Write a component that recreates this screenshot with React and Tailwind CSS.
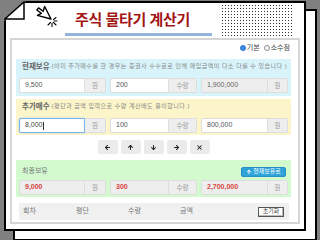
import { ArrowLeft, ArrowUp, ArrowDown, ArrowRight, X } from "lucide-react";

function Cursor() {
  return (
    <svg width="26" height="24" viewBox="0 0 26 24" className="shrink-0">
      <g transform="translate(19 16) rotate(153)">
        <path
          d="M0 0 L0 14 L3.5 10.5 L6 15.5 L8.5 14.5 L6 9.5 L10.5 9.5 Z"
          fill="#fff"
          stroke="#000"
          strokeWidth="1.4"
          strokeLinejoin="round"
        />
      </g>
      <g stroke="#000" strokeWidth="1.1" strokeLinecap="round">
        <path d="M20 20 L20 23.5" />
        <path d="M21.5 19.5 L24 22" />
        <path d="M22 18 L25 18" />
        <path d="M18.5 19.5 L16 22" />
        <path d="M21.5 16.5 L24 14.5" />
      </g>
    </svg>
  );
}

function Fold() {
  return (
    <svg
      width="24"
      height="22"
      viewBox="0 0 24 22"
      className="absolute -left-[2px] -top-[2px]"
    >
      <polygon points="0,0 22,0 0,20" fill="#808080" />
      <polygon
        points="0.8,18 20,1 20,18"
        fill="#fff"
        stroke="#000"
        strokeWidth="1.5"
        strokeLinejoin="miter"
      />
    </svg>
  );
}

function Field({ box, unitBox, value, unit, readOnly, red, focus }) {
  return (
    <div className="flex h-[15px]">
      <div
        className={
          box +
          " flex items-center pl-[5px] rounded-l-[2px] border text-[7px] " +
          (focus
            ? "border-[#7bb3e8] bg-white shadow-[0_0_2px_#a8d0f5] text-[#444]"
            : readOnly
            ? "border-[#dddddd] bg-[#eeeeee]"
            : "border-[#dddddd] bg-white text-[#555]") +
          (red ? " text-[#d9433f] font-bold" : readOnly ? " text-[#666]" : "")
        }
      >
        {value}
        {focus && <span className="ml-[0.5px] h-[8px] border-r border-[#333]" />}
      </div>
      <div
        className={
          unitBox +
          " flex items-center justify-center rounded-r-[2px] border border-l-0 border-[#dddddd] bg-[#eeeeee] text-[6.5px] text-[#999]"
        }
      >
        {unit}
      </div>
    </div>
  );
}

function Row({ vals, readOnly3, red, focus1 }) {
  return (
    <div className="flex gap-[4px]">
      <Field box="w-[66px]" unitBox="w-[21px]" value={vals[0]} unit="원" readOnly={red} red={red} focus={focus1} />
      <Field box="w-[59px]" unitBox="w-[28px]" value={vals[1]} unit="수량" readOnly={red} red={red} />
      <Field box="w-[67px]" unitBox="w-[20px]" value={vals[2]} unit="원" readOnly={readOnly3 || red} red={red} />
    </div>
  );
}

export default function App() {
  return (
    <div className="w-[320px] h-[240px] overflow-hidden bg-[#808080] pt-[1px] pl-[4px] font-[family-name:'Liberation_Sans','Noto_Sans_CJK_KR',sans-serif]">
      <div className="relative w-[302px] h-[230px] border-2 border-black bg-white shadow-[10px_9px_0_-1px_#fff,10px_9px_0_1px_#000]">
        <Fold />

        <div className="flex h-[35px]">
          <div className="ml-[26px]">
            <Cursor />
          </div>
          <div className="ml-[7px] w-[147px]">
            <div className="mt-[6px] h-[20px] pl-[10px] text-[15px] leading-[20px] font-bold tracking-[-0.2px] text-[#a31616] font-[family-name:'Noto_Sans_CJK_KR',sans-serif]">
              주식 물타기 계산기
            </div>
            <div className="mt-[4px] h-[3px] bg-[#93b4da]" />
          </div>
          <div className="ml-[10px] mt-[2px] w-[70px] h-[32px] bg-[radial-gradient(circle_at_0.5px_0.5px,#333_0.7px,transparent_0.8px)] bg-[length:3px_3px]" />
        </div>

        <div className="ml-[4px] w-[290px] h-[186px] border-2 border-[#d6d6d6] bg-white">
          <div className="flex h-[10px] mt-[3px] items-center justify-end pr-[8px] text-[7px] text-[#444]">
            <span className="w-[6px] h-[6px] rounded-full bg-[#3b8fe6] border border-[#2a73c8]" />
            <span className="ml-[1px]">기본</span>
            <span className="ml-[4px] w-[6px] h-[6px] rounded-full bg-white border border-[#888]" />
            <span className="ml-[1px]">소수점</span>
          </div>

          <div className="ml-[4px] mt-[6px] w-[275px] h-[37px] bg-[#d8f3fa] pl-[3px] pt-[3px]">
            <div className="h-[9px] pl-[3px] flex items-center text-[#666] whitespace-nowrap">
              <span className="text-[7.5px] font-bold">현재보유</span>
              <span className="ml-[2px] text-[6px] tracking-[0.5px] text-[#888]">
                (이미 추가매수를 한 경우는 증권사 수수료로 인해 매입금액이 다소 다를 수 있습니다 )
              </span>
            </div>
            <div className="mt-[7px]">
              <Row vals={["9,500", "200", "1,900,000"]} readOnly3 />
            </div>
          </div>

          <div className="ml-[4px] mt-[3px] w-[275px] h-[36px] bg-[#fbf5c9] pl-[3px] pt-[3px]">
            <div className="h-[9px] pl-[3px] flex items-center text-[#666] whitespace-nowrap">
              <span className="text-[7.5px] font-bold">추가매수</span>
              <span className="ml-[2px] text-[6px] tracking-[0.5px] text-[#888]">
                (평단과 금액 입력으로 수량 계산에도 용이합니다.)
              </span>
            </div>
            <div className="mt-[7px]">
              <Row vals={["8,000", "100", "800,000"]} focus1 />
            </div>
          </div>

          <div className="mt-[5px] h-[14px] flex justify-center gap-[3px] pr-[3px]">
            {[ArrowLeft, ArrowUp, ArrowDown, ArrowRight, X].map((Icon, i) => (
              <div
                key={i}
                className="w-[20px] h-[14px] rounded-[2px] bg-[#ebebeb] flex items-center justify-center text-[#222]"
              >
                <Icon size={7} strokeWidth={3.5} />
              </div>
            ))}
          </div>

          <div className="ml-[4px] mt-[6px] w-[275px] h-[37px] bg-[#d3f9cf] pl-[5px] pr-[5px] pt-[6px]">
            <div className="h-[11px] flex items-center justify-between">
              <span className="pl-[1px] text-[7px] text-[#777]">최종보유</span>
              <div className="h-[10px] w-[45px] rounded-[2px] bg-[#2da3d9] border border-[#2590c4] flex items-center justify-center gap-[1px] text-[6px] text-white">
                <ArrowUp size={6} strokeWidth={4} />
                <span>현재보유로</span>
              </div>
            </div>
            <div className="mt-[3px] -ml-[2px]">
              <Row vals={["9,000", "300", "2,700,000"]} red />
            </div>
          </div>

          <div className="ml-[7px] mt-[6px] w-[270px] h-[17px] bg-[#f0f0f0] flex items-center text-[7px] text-[#777]">
            <span className="w-[57px] pl-[4px]">회차</span>
            <span className="w-[52px]">평단</span>
            <span className="w-[52px]">수량</span>
            <span className="w-[52px]">금액</span>
            <div className="ml-auto mr-[5px] w-[26px] h-[10px] border border-[#555] bg-white shadow-[inset_-1px_-1px_0_#bbb] flex items-center justify-center text-[6px] text-[#444]">
              초기화
            </div>
          </div>
        </div>
      </div>
    </div>
  );
}
